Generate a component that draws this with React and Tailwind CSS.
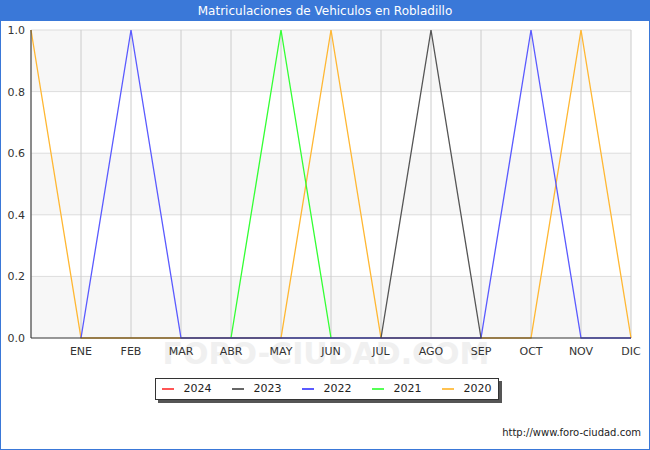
const X = (i) => 30 + 50 * i;
const Y = (v) => 317 - 308 * v;
const months = ["ENE","FEB","MAR","ABR","MAY","JUN","JUL","AGO","SEP","OCT","NOV","DIC"];
const series = [
  { c: "#ffb732", d: [1,0,0,0,0,0,1,0,0,0,0,1,0] },
  { c: "#33ff33", d: [null,null,null,null,0,1,0,null,null,null,null,null,null] },
  { c: "#5a5aff", d: [null,0,1,0,0,0,0,0,0,0,1,0,0] },
  { c: "#555555", d: [null,null,null,null,null,null,null,0,1,0,null,null,null] },
];
const legend = [["2024","#ff5555"],["2023","#666666"],["2022","#5a5aff"],["2021","#55ff55"],["2020","#ffc250"]];

function pts(d) {
  return d.map((v, i) => (v == null ? null : `${X(i)},${Y(v)}`)).filter(Boolean).join(" ");
}

export default function App() {
  return (
    <div className="w-[650px] h-[450px] border border-[#3a78d8] bg-white flex flex-col" style={{ fontFamily: "'DejaVu Sans', sans-serif" }}>
      <div className="h-[20px] bg-[#3a78d8] text-white text-[12px] flex items-center justify-center">Matriculaciones de Vehiculos en Robladillo</div>
      <div className="relative h-[345px]">
        <svg width="648" height="345" className="absolute left-0 top-0" fontSize="11" fontFamily="DejaVu Sans, sans-serif">
          <rect x="30" y={Y(1)} width="600" height={Y(0.8) - Y(1)} fill="#f7f7f7" />
          <rect x="30" y={Y(0.6)} width="600" height={Y(0.4) - Y(0.6)} fill="#f7f7f7" />
          <rect x="30" y={Y(0.2)} width="600" height={Y(0) - Y(0.2)} fill="#f7f7f7" />
          {[0.2, 0.4, 0.6, 0.8, 1].map((v) => (
            <line key={v} x1="30" x2="630" y1={Y(v)} y2={Y(v)} stroke="#dddddd" />
          ))}
          {Array.from({ length: 13 }, (_, i) => (
            <line key={i} x1={X(i)} x2={X(i)} y1={Y(1)} y2={Y(0)} stroke="#cccccc" />
          ))}
          <text x="325" y="343" textAnchor="middle" fontSize="30" fill="#f0f0f0" fontWeight="bold">FORO-CIUDAD.COM</text>
          {series.map((s, i) => (
            <polyline key={i} points={pts(s.d)} fill="none" stroke={s.c} strokeWidth="1.3" />
          ))}
          <line x1="30" x2="630" y1={Y(0)} y2={Y(0)} stroke="#333" />
          <line x1="30" x2="30" y1={Y(1)} y2={Y(0)} stroke="#333" />
          {[0, 0.2, 0.4, 0.6, 0.8, 1].map((v) => (
            <text key={v} x="24" y={Y(v) + 4} textAnchor="end" fill="#333">{v.toFixed(1)}</text>
          ))}
          {months.map((m, i) => (
            <text key={m} x={X(i + 1)} y="334" textAnchor="middle" fill="#333">{m}</text>
          ))}
        </svg>
      </div>
      <div className="flex justify-center mt-[12px] ml-[3px]">
        <div className="flex items-center gap-[20px] border border-[#333] bg-white px-[6px] h-[22px] text-[11px] text-[#222] shadow-[3px_3px_0_#555]">
          {legend.map(([l, c]) => (
            <div key={l} className="flex items-center gap-[10px]">
              <span className="w-[12px] h-[2px]" style={{ background: c }} />
              <span>{l}</span>
            </div>
          ))}
        </div>
      </div>
      <div className="flex-1" />
      <div className="text-right text-[10px] text-[#222] pr-[8px] pb-[9px]">http://www.foro-ciudad.com</div>
    </div>
  );
}
